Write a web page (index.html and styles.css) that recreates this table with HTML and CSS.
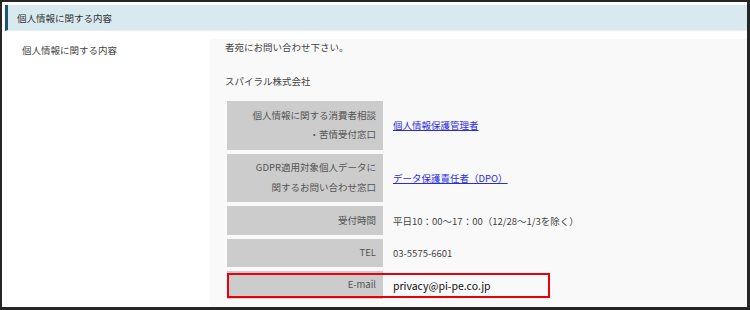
FILE: index.html
```html
<!DOCTYPE html>
<html lang="ja">
<head>
<meta charset="utf-8">
<title>個人情報に関する内容</title>
<link rel="stylesheet" href="styles.css">
</head>
<body>
<div class="frame">
  <h2 class="section-head">個人情報に関する内容</h2>
  <div class="section-body">
    <div class="side-label">個人情報に関する内容</div>
    <div class="content">
      <p class="lead">者宛にお問い合わせ下さい。</p>
      <p class="company">スパイラル株式会社</p>
      <table class="contact">
        <tr class="tall">
          <th>個人情報に関する消費者相談<br>・苦情受付窓口</th>
          <td><a href="#">個人情報保護管理者</a></td>
        </tr>
        <tr class="tall">
          <th>GDPR適用対象個人データに<br>関するお問い合わせ窓口</th>
          <td><a href="#">データ保護責任者（DPO）</a></td>
        </tr>
        <tr class="row-hours">
          <th>受付時間</th>
          <td>平日10：00～17：00（12/28～1/3を除く）</td>
        </tr>
        <tr class="row-tel">
          <th>TEL</th>
          <td>03-5575-6601</td>
        </tr>
        <tr class="row-mail">
          <th>E-mail</th>
          <td class="mail">privacy@pi-pe.co.jp<span class="highlight"></span></td>
        </tr>
      </table>
    </div>
  </div>
</div>
</body>
</html>
```
FILE: styles.css
```css
* { box-sizing: border-box; }

html, body {
  margin: 0;
  padding: 0;
  background: #fff;
}

body {
  font-family: "Noto Sans CJK JP", "Noto Sans", sans-serif;
  font-size: 9.5px;
  color: #444;
}

.frame {
  width: 750px;
  height: 310px;
  border-style: solid;
  border-color: #262626;
  border-width: 2px 3px 3px 2px;
  padding-top: 3px;
  background: #fff;
  display: flex;
  flex-direction: column;
  overflow: hidden;
}

.section-head {
  margin: 0 0 0 3px;
  height: 28px;
  background: #d9e9f0;
  border-left: 3px solid #1b5670;
  border-bottom: 1px solid #e9f3f7;
  padding: 1px 0 0 9px;
  font-size: 9.5px;
  font-weight: normal;
  color: #333;
  display: flex;
  align-items: center;
}

.section-body {
  margin-top: 8px;
  flex: 1;
  display: flex;
}

.side-label {
  width: 208px;
  padding: 4px 0 0 20px;
  color: #444;
}

.content {
  flex: 1;
  background: #f9f9f9;
  padding: 0 0 0 15px;
}

.lead, .company {
  margin: 0;
  line-height: 14px;
}

.lead { padding-top: 1px; }
.company { margin-top: 20px; }

.contact {
  margin-top: 13px;
  margin-left: 2px;
  border-collapse: separate;
  border-spacing: 0 4px;
  position: relative;
  top: -4px;
}

.contact th {
  width: 156px;
  background: #cccccc;
  font-weight: normal;
  text-align: right;
  padding: 0 7px 0 0;
  color: #555;
  line-height: 19.5px;
}

.contact td {
  padding: 0 0 0 10px;
  color: #444;
}

.contact .tall th, .contact .tall td { height: 48.5px; }
.contact .row-hours th, .contact .row-hours td { height: 29px; }
.contact .row-tel th, .contact .row-tel td { height: 28px; }
.contact .row-mail th, .contact .row-mail td { height: 28px; }

.contact a {
  color: #2b2bdc;
  text-decoration: underline;
}

.contact .mail {
  position: relative;
  font-size: 10.5px;
  color: #111;
}

/* red call-out frame around the e-mail row */
.highlight {
  position: absolute;
  left: -156.5px;
  top: 2px;
  width: 323px;
  height: 25px;
  border: 2px solid #e8000b;
  pointer-events: none;
}
```
